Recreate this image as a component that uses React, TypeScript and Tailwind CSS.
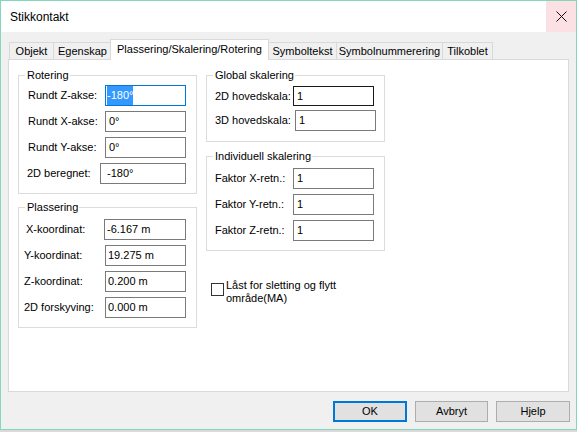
import React from "react";

type FieldProps = {
  label: string;
  labelCls: string;
  boxCls: string;
  value: string;
  sel?: boolean;
};

function Field({ label, labelCls, boxCls, value, sel }: FieldProps) {
  return (
    <div className="flex items-center">
      <span className={"shrink-0 whitespace-nowrap " + labelCls}>{label}</span>
      <div className={"shrink-0 bg-white border flex items-center " + boxCls}>
        {sel ? (
          <span className="bg-[#3399ff] text-white h-[19px] flex items-center">{value}</span>
        ) : (
          <span className="whitespace-nowrap">{value}</span>
        )}
      </div>
    </div>
  );
}

function Group({ title, cls, children }: { title: string; cls: string; children: React.ReactNode }) {
  return (
    <div className={"relative border border-[#dcdcdc] " + cls}>
      <span className="absolute left-[6px] top-[-7px] leading-[13px] bg-white pl-[2px] pr-[1px] whitespace-nowrap">
        {title}
      </span>
      {children}
    </div>
  );
}

function Tab({ label, cls }: { label: string; cls: string }) {
  return (
    <div
      className={
        "h-[17px] border-l border-t border-r border-[#d9d9d9] bg-[#f0f0f0] flex items-center justify-center whitespace-nowrap " +
        cls
      }
    >
      {label}
    </div>
  );
}

export default function App() {
  return (
    <div className="w-[577px] h-[432px] bg-[#dadada] font-['Liberation_Sans',Arial,sans-serif] text-[11px] text-black">
      <div className="w-[577px] h-[430px] border border-[#84d6bd] bg-[#f0f0f0] flex flex-col">
        {/* Title bar */}
        <div className="h-[31px] bg-white flex items-center justify-between shrink-0">
          <span className="pl-[9px] text-[12px]">Stikkontakt</span>
          <div className="w-[30px] h-[31px] bg-[#fbe1e3] flex items-center justify-center">
            <svg width="11" height="11" viewBox="0 0 11 11">
              <path d="M0.5 0.5 L10.5 10.5 M10.5 0.5 L0.5 10.5" stroke="#111" strokeWidth="1" fill="none" />
            </svg>
          </div>
        </div>

        {/* Body */}
        <div className="px-[7px] pt-[7px] flex flex-col">
          {/* Tabs */}
          <div className="h-[20px] flex items-end pl-[1px] relative z-10">
            <Tab label="Objekt" cls="w-[45px]" />
            <Tab label="Egenskap" cls="w-[59px] ml-[-1px]" />
            <div className="h-[21px] mb-[-1px] w-[159px] ml-[-2px] bg-white border-l border-t border-r border-[#d9d9d9] flex items-center justify-center whitespace-nowrap relative z-10 pb-[2px]">
              Plassering/Skalering/Rotering
            </div>
            <Tab label="Symboltekst" cls="w-[69px] ml-[-1px]" />
            <Tab label="Symbolnummerering" cls="w-[107px] ml-[-1px]" />
            <Tab label="Tilkoblet" cls="w-[51px] ml-[-1px]" />
          </div>

          {/* Panel */}
          <div className="h-[333px] border border-[#d9d9d9] bg-white flex pt-[15px] pl-[9px]">
            {/* Left column */}
            <div className="w-[179px] flex flex-col">
              <Group title="Rotering" cls="h-[119px] pt-[9px] flex flex-col gap-[5px]">
                <Field label="Rundt Z-akse:" labelCls="w-[86px] pl-[9px]" boxCls="w-[81px] h-[21px] border-[#0078d7] pl-[1px]" value="-180°" sel />
                <Field label="Rundt X-akse:" labelCls="w-[86px] pl-[9px]" boxCls="w-[81px] h-[21px] border-[#7a7a7a] pl-[3px]" value="0°" />
                <Field label="Rundt Y-akse:" labelCls="w-[86px] pl-[9px]" boxCls="w-[81px] h-[21px] border-[#7a7a7a] pl-[3px]" value="0°" />
                <Field label="2D beregnet:" labelCls="w-[81px] pl-[8px]" boxCls="w-[86px] h-[21px] border-[#7a7a7a] pl-[6px]" value="-180°" />
              </Group>
              <Group title="Plassering" cls="mt-[13px] h-[121px] pt-[11px] flex flex-col gap-[5px]">
                <Field label="X-koordinat:" labelCls="w-[85px] pl-[7px]" boxCls="w-[82px] h-[21px] border-[#7a7a7a] pl-[2px]" value="-6.167 m" />
                <Field label="Y-koordinat:" labelCls="w-[86px] pl-[5px]" boxCls="w-[81px] h-[21px] border-[#7a7a7a] pl-[2px]" value="19.275 m" />
                <Field label="Z-koordinat:" labelCls="w-[86px] pl-[5px]" boxCls="w-[81px] h-[21px] border-[#7a7a7a] pl-[2px]" value="0.200 m" />
                <Field label="2D forskyving:" labelCls="w-[86px] pl-[5px]" boxCls="w-[81px] h-[21px] border-[#7a7a7a] pl-[2px]" value="0.000 m" />
              </Group>
            </div>

            {/* Right column */}
            <div className="w-[179px] ml-[9px] flex flex-col">
              <Group title="Global skalering" cls="h-[67px] pt-[10px] flex flex-col gap-[4px]">
                <Field label="2D hovedskala:" labelCls="w-[86px] pl-[8px]" boxCls="w-[81px] h-[20px] border-[#1a1a1a] pl-[3px]" value="1" />
                <Field label="3D hovedskala:" labelCls="w-[88px] pl-[8px]" boxCls="w-[81px] h-[21px] border-[#7a7a7a] pl-[3px]" value="1" />
              </Group>
              <Group title="Individuell skalering" cls="mt-[14px] h-[95px] pt-[11px] flex flex-col gap-[5px]">
                <Field label="Faktor X-retn.:" labelCls="w-[86px] pl-[8px]" boxCls="w-[81px] h-[21px] border-[#7a7a7a] pl-[3px]" value="1" />
                <Field label="Faktor Y-retn.:" labelCls="w-[86px] pl-[8px]" boxCls="w-[81px] h-[21px] border-[#7a7a7a] pl-[3px]" value="1" />
                <Field label="Faktor Z-retn.:" labelCls="w-[86px] pl-[8px]" boxCls="w-[81px] h-[21px] border-[#7a7a7a] pl-[3px]" value="1" />
              </Group>
              <div className="mt-[31px] ml-[5px] flex items-start">
                <div className="w-[13px] h-[13px] mt-[1px] border border-[#333333] bg-white shrink-0" />
                <div className="ml-[2px] mt-[-3px] leading-[13px]">
                  Låst for sletting og flytt
                  <br />
                  område(MA)
                </div>
              </div>
            </div>
          </div>

          {/* Buttons */}
          <div className="mt-[9px] flex justify-end gap-[8px] mr-[-1px]">
            <button className="w-[74px] h-[21px] bg-[#e1e1e1] border-2 border-[#0078d7] flex items-center justify-center">
              OK
            </button>
            <button className="w-[73px] h-[21px] bg-[#e1e1e1] border border-[#adadad] flex items-center justify-center">
              Avbryt
            </button>
            <button className="w-[74px] h-[21px] bg-[#e1e1e1] border border-[#adadad] flex items-center justify-center">
              Hjelp
            </button>
          </div>
        </div>
      </div>
    </div>
  );
}
